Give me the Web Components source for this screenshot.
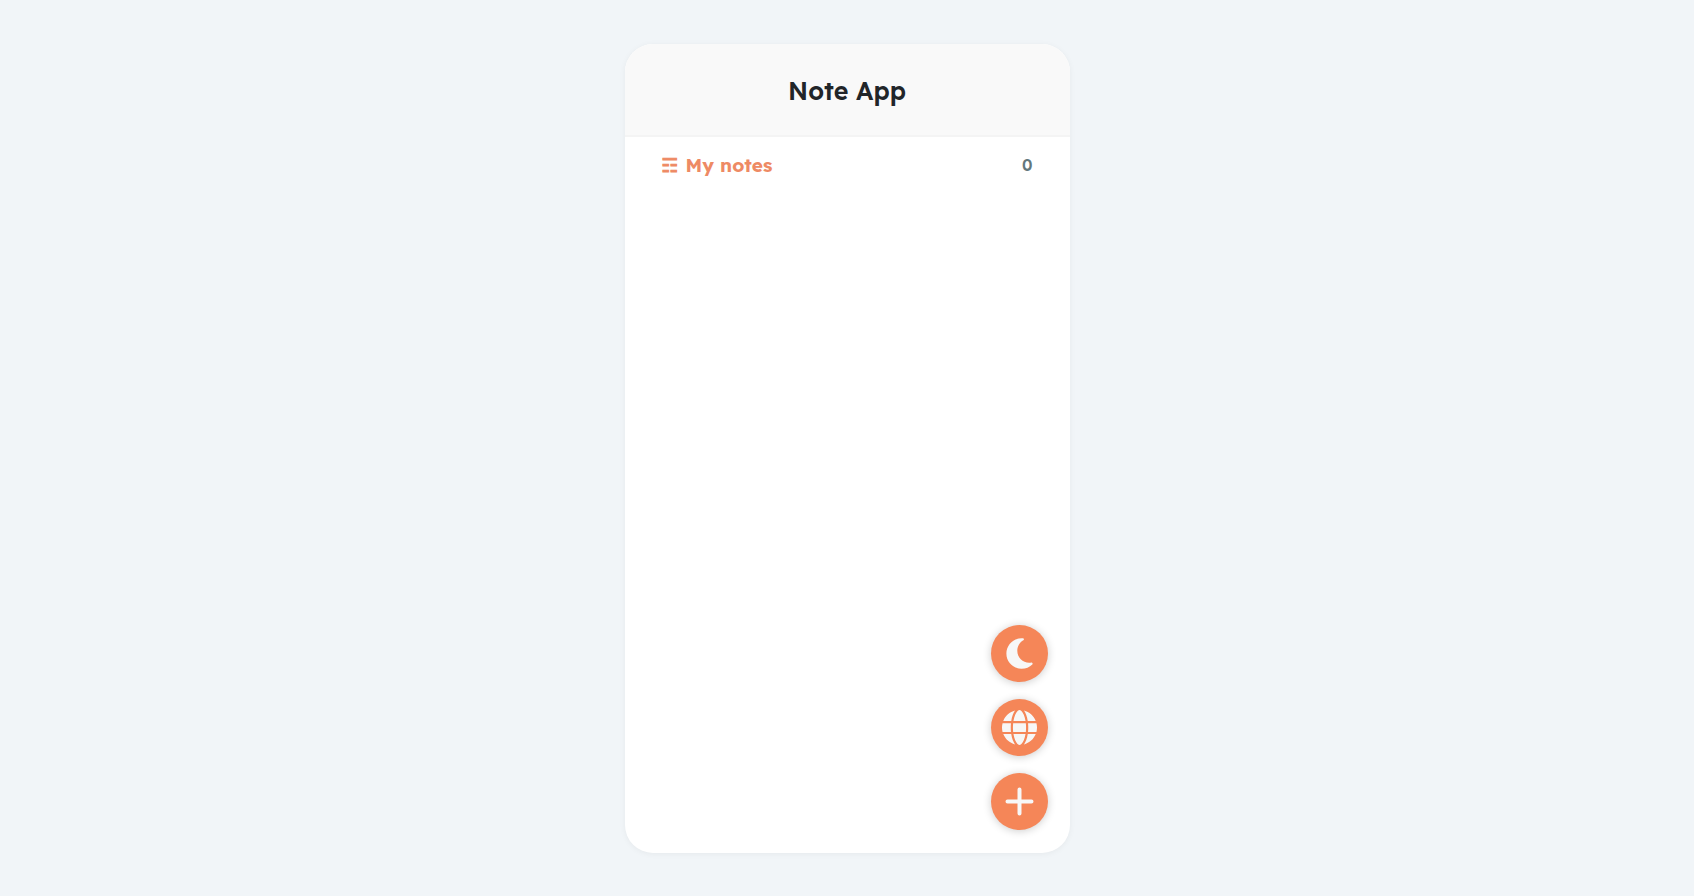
<!DOCTYPE html>
<html lang="en">
<head>
<meta charset="utf-8">
<meta name="viewport" content="width=device-width, initial-scale=1">
<title>Note App</title>
<style>
body { margin: 0; background: #f1f5f8; font-family: Lexend, Inter, sans-serif; color: #212529; }
</style>
</head>
<body>
<note-app>
  <note-header slot="header">Note App</note-header>
  <note-list-heading count="0">My notes</note-list-heading>
  <note-action slot="actions" label="Dark mode">
    <svg width="29" height="35" viewBox="0 0 384 512" fill="currentColor" aria-hidden="true"><path d="M223.500 32C100 32 0 132.300 0 256S100 480 223.500 480c60.600 0 115.500-24.200 155.800-63.400c5-4.900 6.300-12.500 3.100-18.700s-10.100-9.700-17-8.500c-9.800 1.700-19.800 2.600-30.100 2.600c-96.900 0-175.500-78.800-175.500-176c0-65.800 36-123.100 89.300-153.300c6.100-3.500 9.200-10.500 7.700-17.300s-7.300-11.900-14.300-12.500c-6.300-.5-12.600-.8-19-.8z"/></svg>
  </note-action>
  <note-action slot="actions" label="Language">
    <svg width="35" height="35" viewBox="0 0 512 512" fill="currentColor" aria-hidden="true"><path d="M352 256c0 22.200-1.200 43.600-3.300 64H163.300c-2.200-20.400-3.300-41.800-3.300-64s1.200-43.600 3.300-64H348.700c2.200 20.400 3.300 41.800 3.300 64zm28.800-64H503.900c5.300 20.500 8.100 41.900 8.100 64s-2.800 43.500-8.100 64H380.800c2.100-20.600 3.200-42 3.200-64s-1.100-43.400-3.200-64zm112.600-32H376.700c-10-63.900-29.800-117.400-55.300-151.600c78.300 20.700 142 77.500 171.900 151.600zm-149.100 0H167.700c6.100-36.400 15.500-68.600 27-94.700c10.500-23.600 22.200-40.700 33.500-51.500C239.400 3.200 248.700 0 256 0s16.600 3.200 27.800 13.800c11.300 10.800 23 27.900 33.500 51.500c11.600 26 20.900 58.200 27 94.700zm-209 0H18.600C48.600 85.900 112.200 29.100 190.600 8.400C165.100 42.600 145.300 96.100 135.300 160zM8.100 192H131.200c-2.100 20.600-3.200 42-3.200 64s1.100 43.400 3.200 64H8.100C2.800 299.500 0 278.100 0 256s2.800-43.500 8.100-64zM194.700 446.600c-11.600-26-20.900-58.200-27-94.600H344.300c-6.100 36.400-15.500 68.600-27 94.600c-10.500 23.600-22.200 40.700-33.500 51.500C272.600 508.800 263.300 512 256 512s-16.600-3.200-27.800-13.800c-11.300-10.800-23-27.900-33.500-51.500zM135.300 352c10 63.900 29.800 117.400 55.300 151.600C112.200 482.900 48.600 426.100 18.600 352H135.300zm358.100 0c-30 74.100-93.600 130.900-171.900 151.600c25.500-34.200 45.200-87.700 55.300-151.600H493.400z"/></svg>
  </note-action>
  <note-action slot="actions" label="Add note">
    <svg width="29" height="29" viewBox="0 0 29 29" fill="none" stroke="currentColor" stroke-width="4" stroke-linecap="round" aria-hidden="true"><path d="M14.500 2.500v24M2.500 14.500h24"/></svg>
  </note-action>
</note-app>

<template id="app-template">
  <style>
    :host { display: grid; box-sizing: border-box; min-height: 100vh; padding: 44px 16px 43px; justify-items: center; }
    main { position: relative; box-sizing: border-box; width: 100%; max-width: 445px; border-radius: 28px; background: #fff; overflow: hidden; box-shadow: 0 1px 6px rgba(0,0,0,.05); }
    .actions { position: absolute; right: 22px; bottom: 23px; display: flex; flex-direction: column; gap: 17px; }
  </style>
  <main>
    <slot name="header"></slot>
    <slot></slot>
    <div class="actions"><slot name="actions"></slot></div>
  </main>
</template>

<template id="header-template">
  <style>
    :host { display: block; }
    header { padding: 31px 24px 28px; background: #f9f9f9; border-bottom: 2px solid #f4f4f4; text-align: center; }
    h1 { margin: 0; font-size: 25px; line-height: 32px; font-weight: 600; }
  </style>
  <header><h1><slot></slot></h1></header>
</template>

<template id="heading-template">
  <style>
    :host { display: flex; align-items: center; justify-content: space-between; padding: 16px 37px; }
    h2 { display: flex; gap: 7px; margin: 0; font-size: 19px; line-height: 24px; font-weight: 700; color: #ee8a64; }
    .mark { font-family: "DejaVu Sans", sans-serif; font-weight: 700; -webkit-text-stroke: 1px currentColor; }
    .count { font-size: 16px; line-height: 24px; font-weight: 600; color: #63777d; }
  </style>
  <h2><span class="mark">☶</span><span><slot></slot></span></h2>
  <span class="count"></span>
</template>

<template id="action-template">
  <style>
    :host { display: block; }
    button { display: grid; place-items: center; width: 57px; height: 57px; padding: 0; border: 0; border-radius: 50%; background: #f58658; color: #f7f7f7; box-shadow: 0 1px 8px rgba(0,0,0,.2); cursor: pointer; }
  </style>
  <button type="button"><slot></slot></button>
</template>

<script>
class TemplateElement extends HTMLElement {
  constructor() {
    super();
    const template = document.getElementById(this.constructor.template);
    this.attachShadow({ mode: "open" }).append(template.content.cloneNode(true));
  }
}
customElements.define("note-app", class extends TemplateElement {
  static template = "app-template";
});
customElements.define("note-header", class extends TemplateElement {
  static template = "header-template";
});
customElements.define("note-list-heading", class extends TemplateElement {
  static template = "heading-template";
  static observedAttributes = ["count"];
  attributeChangedCallback(name, previous, value) {
    this.shadowRoot.querySelector(".count").textContent = value;
  }
});
customElements.define("note-action", class extends TemplateElement {
  static template = "action-template";
  connectedCallback() {
    this.shadowRoot.querySelector("button").setAttribute("aria-label", this.getAttribute("label"));
  }
});
</script>
</body>
</html>
